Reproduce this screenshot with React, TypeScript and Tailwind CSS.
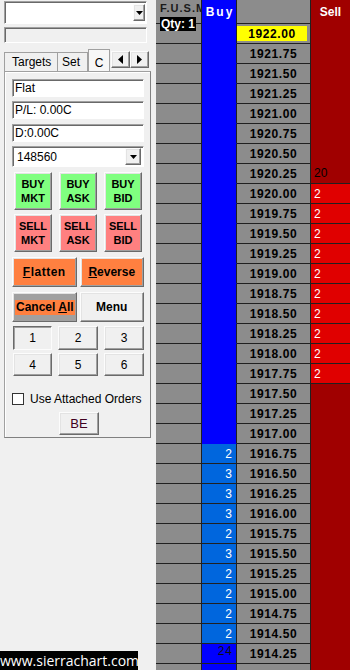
import React from 'react';

const raised =
  'border border-t-[#fcfcfc] border-l-[#fcfcfc] border-r-[#6a6a6a] border-b-[#6a6a6a] shadow-[inset_-1px_-1px_0_#a0a0a0,inset_1px_1px_0_#e3e3e3]';
const pressed =
  'border border-t-[#6a6a6a] border-l-[#6a6a6a] border-r-[#fcfcfc] border-b-[#fcfcfc] shadow-[inset_1px_1px_0_#a0a0a0]';
const sunken =
  'border border-t-[#a0a0a0] border-l-[#a0a0a0] border-r-white border-b-white shadow-[inset_1px_1px_0_#696969]';

const DownArrow = () => (
  <svg width="7" height="4" viewBox="0 0 7 4">
    <polygon points="0,0 7,0 3.5,4" fill="#000" />
  </svg>
);

const DropBtn = ({ className }: { className: string }) => (
  <div className={`flex items-center justify-center bg-[#f0f0f0] ${raised} ${className}`}>
    <DownArrow />
  </div>
);

const TextBox = ({ children }: { children?: React.ReactNode }) => (
  <div className={`flex h-[18px] items-center bg-white pl-[2px] text-[12px] ${sunken}`}>{children}</div>
);

const TwoLine = ({ top, bottom, color }: { top: string; bottom: string; color: string }) => (
  <div
    className={`flex h-[38px] w-[38px] flex-col items-center justify-center text-[11px] font-bold leading-[14px] ${raised} ${color}`}
  >
    <span>{top}</span>
    <span>{bottom}</span>
  </div>
);

function LeftPanel() {
  return (
    <div className="flex w-[156px] shrink-0 flex-col px-[4px] pt-[1px] text-[12px]">
      {/* symbol combo */}
      <div className={`flex h-[23px] w-[143px] items-center justify-end bg-white pr-[1px] ${sunken}`}>
        <DropBtn className="h-[17px] w-[12px]" />
      </div>
      <div className={`mt-[3px] h-[16px] w-[143px] bg-[#f0f0f0] ${sunken}`} />

      {/* tabs */}
      <div className="mt-[6px] flex h-[22px] items-end">
        <div className="flex h-[19px] w-[54px] items-center border border-b-0 border-[#a0a0a0] pl-[7px]">Targets</div>
        <div className="flex h-[19px] w-[30px] items-center border border-b-0 border-l-0 border-[#a0a0a0] pl-[4px]">Set</div>
        <div className="flex h-[22px] w-[22px] items-start justify-center border border-b-0 border-[#a0a0a0] bg-[#f7f7f7] pt-[4px]">
          C
        </div>
        <div className="mb-[3px] ml-[1px] flex h-[17px]">
          <div className={`flex w-[19px] items-center justify-center bg-[#f0f0f0] ${raised}`}>
            <svg width="5" height="9" viewBox="0 0 5 9">
              <polygon points="5,0 5,9 0,4.5" fill="#000" />
            </svg>
          </div>
          <div className={`flex w-[19px] items-center justify-center bg-[#f0f0f0] ${raised}`}>
            <svg width="5" height="9" viewBox="0 0 5 9">
              <polygon points="0,0 0,9 5,4.5" fill="#000" />
            </svg>
          </div>
        </div>
      </div>

      {/* tab body */}
      <div className="flex h-[367px] w-[147px] flex-col border border-[#a0a0a0] border-r-[#808080] border-b-[#808080] bg-[#f0f0f0] pl-[7px] pr-[6px] pt-[7px] shadow-[inset_1px_1px_0_#fff]">
        <TextBox>Flat</TextBox>
        <div className="mt-[4px]">
          <TextBox>P/L: 0.00C</TextBox>
        </div>
        <div className="mt-[5px]">
          <TextBox>D:0.00C</TextBox>
        </div>
        <div className={`mt-[4px] flex h-[21px] items-center justify-between bg-white pl-[4px] pr-[2px] ${sunken}`}>
          <span>148560</span>
          <DropBtn className="h-[17px] w-[16px]" />
        </div>

        <div className="mt-[5px] flex gap-[7px] px-[2px]">
          <TwoLine top="BUY" bottom="MKT" color="bg-[#80ff80]" />
          <TwoLine top="BUY" bottom="ASK" color="bg-[#80ff80]" />
          <TwoLine top="BUY" bottom="BID" color="bg-[#80ff80]" />
        </div>
        <div className="mt-[4px] flex gap-[7px] px-[2px]">
          <TwoLine top="SELL" bottom="MKT" color="bg-[#ff8080]" />
          <TwoLine top="SELL" bottom="ASK" color="bg-[#ff8080]" />
          <TwoLine top="SELL" bottom="BID" color="bg-[#ff8080]" />
        </div>

        <div className="mt-[5px] flex gap-[3px]">
          <div className={`flex h-[30px] w-[65px] items-center justify-center bg-[#ff8040] font-bold tracking-[0.5px] ${raised}`}>
            <span>
              <span className="underline">F</span>latten
            </span>
          </div>
          <div className={`flex h-[30px] w-[65px] items-center justify-center bg-[#ff8040] font-bold ${raised}`}>
            <span>
              <span className="underline">R</span>everse
            </span>
          </div>
        </div>
        <div className="mt-[5px] flex gap-[3px]">
          <div className={`flex h-[30px] w-[65px] items-center whitespace-nowrap bg-[#a0a0a0] pl-[2px] font-bold ${raised}`}>
            <span className="bg-[#ff8040] px-[1px] leading-[15px]">
              Cancel <span className="underline">A</span>ll
            </span>
          </div>
          <div className={`flex h-[30px] w-[65px] items-center justify-center bg-[#f0f0f0] font-bold ${raised}`}>Menu</div>
        </div>

        <div className="mt-[4px] flex justify-between pl-[1px]">
          <div className={`flex h-[24px] w-[39px] items-center justify-center bg-[#f0f0f0] ${pressed}`}>1</div>
          <div className={`flex h-[24px] w-[40px] items-center justify-center bg-[#f0f0f0] ${raised}`}>2</div>
          <div className={`flex h-[24px] w-[40px] items-center justify-center bg-[#f0f0f0] ${raised}`}>3</div>
        </div>
        <div className="mt-[3px] flex justify-between pl-[1px]">
          <div className={`flex h-[23px] w-[39px] items-center justify-center bg-[#f0f0f0] ${raised}`}>4</div>
          <div className={`flex h-[23px] w-[40px] items-center justify-center bg-[#f0f0f0] ${raised}`}>5</div>
          <div className={`flex h-[23px] w-[40px] items-center justify-center bg-[#f0f0f0] ${raised}`}>6</div>
        </div>

        <div className="mt-[16px] flex h-[13px] items-center gap-[6px]">
          <div className="h-[12px] w-[12px] border border-[#333] bg-white" />
          <span>Use Attached Orders</span>
        </div>

        <div className="mt-[7px] flex justify-center pl-[2px]">
          <div className={`flex h-[23px] w-[40px] items-center justify-center bg-[#f0f0f0] text-[13px] text-[#400020] ${raised}`}>
            BE
          </div>
        </div>
      </div>
    </div>
  );
}

const buyQty: Record<number, string> = {
  21: '2', 22: '3', 23: '3', 24: '3', 25: '2', 26: '3', 27: '2', 28: '2', 29: '2', 30: '2',
};

function Ladder() {
  const rows = Array.from({ length: 33 }, (_, i) => ({
    i,
    price: i < 32 ? (1922 - i * 0.25).toFixed(2) : '',
  }));

  return (
    <div className="flex flex-1 flex-col">
      {/* header */}
      <div className="relative flex h-[24px] shrink-0">
        <div className="w-[46px] overflow-hidden whitespace-nowrap border-r border-b border-[#202020] bg-[#8c8c8c] pl-[4px] pt-[2px] text-[11px] font-bold leading-[13px] tracking-[1px] text-[#1a1a1a]">
          F.U.S.M
        </div>
        <div className="flex w-[35px] items-center justify-center border-r border-[#202020] bg-[#0000ff] pl-[2px] text-[12px] font-bold tracking-[2px] text-white">
          Buy
        </div>
        <div className="w-[74px] border-r border-b border-[#202020] bg-[#8c8c8c]" />
        <div className="flex w-[39px] items-center justify-center bg-[#a00000] text-[12px] font-bold text-white">Sell</div>
        <div className="absolute left-[4px] top-[17px] z-10 bg-black px-[1px] text-[12px] font-bold leading-[14px] text-white">
          Qty: 1
        </div>
      </div>

      {rows.map(({ i, price }) => {
        const bq = buyQty[i];
        const brightSell = i >= 8 && i <= 17;
        return (
          <div key={i} className="flex h-[20px] shrink-0">
            <div className="w-[46px] border-r border-b border-[#202020] bg-[#8c8c8c]" />
            {bq ? (
              <div className="flex w-[35px] items-center justify-end border-r border-b border-[#202020] bg-[#0066dd] pr-[4px] text-[12px] text-white">
                {bq}
              </div>
            ) : i === 31 ? (
              <div className="flex w-[35px] items-start justify-end border-r border-b border-[#202020] bg-[#0000ff] pr-[3px] text-[12px] leading-[15px] tracking-[1px] text-[#101010]">
                24
              </div>
            ) : (
              <div className="w-[35px] border-r border-b border-r-[#202020] border-b-[#0000ff] bg-[#0000ff]" />
            )}
            <div className="flex w-[74px] items-center justify-center border-r border-b border-[#202020] bg-[#8c8c8c] text-[12px] font-bold tracking-[0.6px] text-black">
              {i === 0 ? (
                <div className="mr-[3px] flex h-[15px] flex-1 items-center justify-center bg-[#ffff00]">{price}</div>
              ) : (
                price
              )}
            </div>
            {brightSell ? (
              <div className="flex w-[39px] items-center border-b border-[#202020] bg-[#e00000] pl-[3px] text-[12px] text-white">
                2
              </div>
            ) : i === 7 ? (
              <div className="flex w-[39px] items-end border-b border-[#202020] bg-[#a00000] pb-[1px] pl-[3px] text-[12px] text-black">
                20
              </div>
            ) : (
              <div className="w-[39px] border-b border-[#a00000] bg-[#a00000]" />
            )}
          </div>
        );
      })}
    </div>
  );
}

export default function App() {
  return (
    <div className="relative flex h-[670px] w-[350px] overflow-hidden bg-[#f0f0f0] font-['Liberation_Sans',Arial,sans-serif] text-black">
      <LeftPanel />
      <Ladder />
      <div className="absolute bottom-0 left-0 w-[138px] bg-black font-['Open_Sans',sans-serif] text-[14px] leading-[19px] text-white">
        www.sierrachart.com
      </div>
    </div>
  );
}
